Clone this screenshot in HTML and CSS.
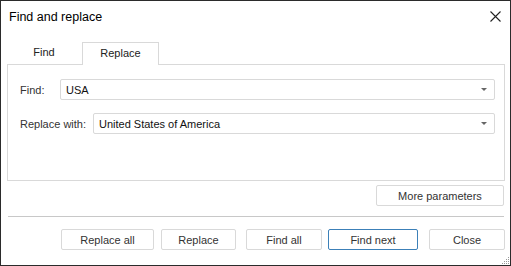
FILE: index.html
```html
<!DOCTYPE html>
<html lang="en">
<head>
    <meta charset="UTF-8">
    <meta name="viewport" content="width=device-width, initial-scale=1.0">
    <title>Find and replace</title>
    <link rel="stylesheet" href="styles.css">
</head>
<body>
    <div class="dialog">
        <div class="titlebar">
            <span class="title">Find and replace</span>
            <svg class="close" width="11" height="11" viewBox="0 0 11 11">
                <path d="M0.5 0.5 L10.5 10.5 M10.5 0.5 L0.5 10.5" stroke="#222" stroke-width="1.1" fill="none"/>
            </svg>
        </div>

        <div class="tabs">
            <div class="tab">Find</div>
            <div class="tab active">Replace</div>
        </div>

        <div class="panel">
            <div class="row">
                <label class="label label-find">Find:</label>
                <div class="combo">
                    <span>USA</span>
                    <span class="arrow"></span>
                </div>
            </div>
            <div class="row">
                <label class="label label-replace">Replace with:</label>
                <div class="combo">
                    <span>United States of America</span>
                    <span class="arrow"></span>
                </div>
            </div>
        </div>

        <div class="more">
            <button class="btn more-btn">More parameters</button>
        </div>

        <div class="separator"></div>

        <div class="actions">
            <button class="btn w-replace-all">Replace all</button>
            <button class="btn w-replace">Replace</button>
            <button class="btn w-find-all">Find all</button>
            <button class="btn w-find-next primary">Find next</button>
            <button class="btn w-close">Close</button>
        </div>

        <svg class="grip" width="9" height="9" viewBox="0 0 9 9">
            <rect x="7" y="1" width="1" height="1" fill="#999"/>
            <rect x="5" y="3" width="1" height="1" fill="#999"/>
            <rect x="7" y="3" width="1" height="1" fill="#999"/>
            <rect x="3" y="5" width="1" height="1" fill="#999"/>
            <rect x="5" y="5" width="1" height="1" fill="#999"/>
            <rect x="7" y="5" width="1" height="1" fill="#999"/>
            <rect x="1" y="7" width="1" height="1" fill="#999"/>
            <rect x="3" y="7" width="1" height="1" fill="#999"/>
            <rect x="5" y="7" width="1" height="1" fill="#999"/>
            <rect x="7" y="7" width="1" height="1" fill="#999"/>
        </svg>
    </div>
</body>
</html>
```

FILE: styles.css
```css
body {
    margin: 0;
    padding: 0;
    background: #fff;
    font-family: 'Liberation Sans', Arial, sans-serif;
    font-size: 11px;
    color: #333;
}

.dialog {
    position: relative;
    width: 511px;
    height: 266px;
    box-sizing: border-box;
    border: 1px solid #2b2b2b;
    background: #fff;
}

.titlebar {
    height: 31px;
    display: flex;
    align-items: center;
    justify-content: space-between;
    padding: 0 9px 0 8px;
}

.title {
    font-size: 12.5px;
    color: #000;
}

.close {
    display: block;
    margin-top: -1px;
}

.tabs {
    display: flex;
    margin: 10px 0 0 5px;
    height: 22px;
}

.tab {
    width: 76px;
    box-sizing: border-box;
    display: flex;
    align-items: center;
    justify-content: center;
    color: #222;
    padding-bottom: 2px;
}

.tab.active {
    border: 1px solid #d9d9d9;
    border-bottom: none;
    background: #fff;
    height: 23px;
    position: relative;
    z-index: 1;
    width: 77px;
}

.panel {
    margin: 0 5px 0 6px;
    height: 117px;
    box-sizing: border-box;
    border: 1px solid #d9d9d9;
    padding: 14px 9px 0 12px;
    display: flex;
    flex-direction: column;
    gap: 13px;
}

.row {
    display: flex;
    align-items: center;
}

.label {
    color: #333;
    white-space: nowrap;
}

.label-find {
    width: 40px;
}

.label-replace {
    width: 73px;
}

.combo {
    flex: 1;
    height: 21px;
    box-sizing: border-box;
    border: 1px solid #d9d9d9;
    border-radius: 2px;
    display: flex;
    align-items: center;
    justify-content: space-between;
    padding: 0 7px 0 5px;
    color: #111;
}

.arrow {
    width: 0;
    height: 0;
    border-left: 3px solid transparent;
    border-right: 3px solid transparent;
    border-top: 3px solid #666;
}

.more {
    display: flex;
    justify-content: flex-end;
    padding: 4px 6px 0 0;
}

.btn {
    font-family: inherit;
    font-size: 11px;
    color: #333;
    background: #fff;
    border: 1px solid #d9d9d9;
    border-radius: 2px;
    height: 21px;
    padding: 0;
    box-sizing: border-box;
}

.more-btn {
    width: 128px;
}

.separator {
    margin: 10px 6px 0 7px;
    border-top: 1px solid #c8c8c8;
}

.actions {
    display: flex;
    justify-content: flex-end;
    gap: 7px;
    padding: 12px 5px 0 0;
}

.btn.primary {
    border-color: #3c80b8;
}

.w-replace-all { width: 93px; }
.w-replace { width: 75px; margin-right: 3px; }
.w-find-all { width: 76px; margin-right: -1px; }
.w-find-next { width: 90px; margin-right: 4px; }
.w-close { width: 76px; }

.grip {
    position: absolute;
    right: 0;
    bottom: 0;
}
```
